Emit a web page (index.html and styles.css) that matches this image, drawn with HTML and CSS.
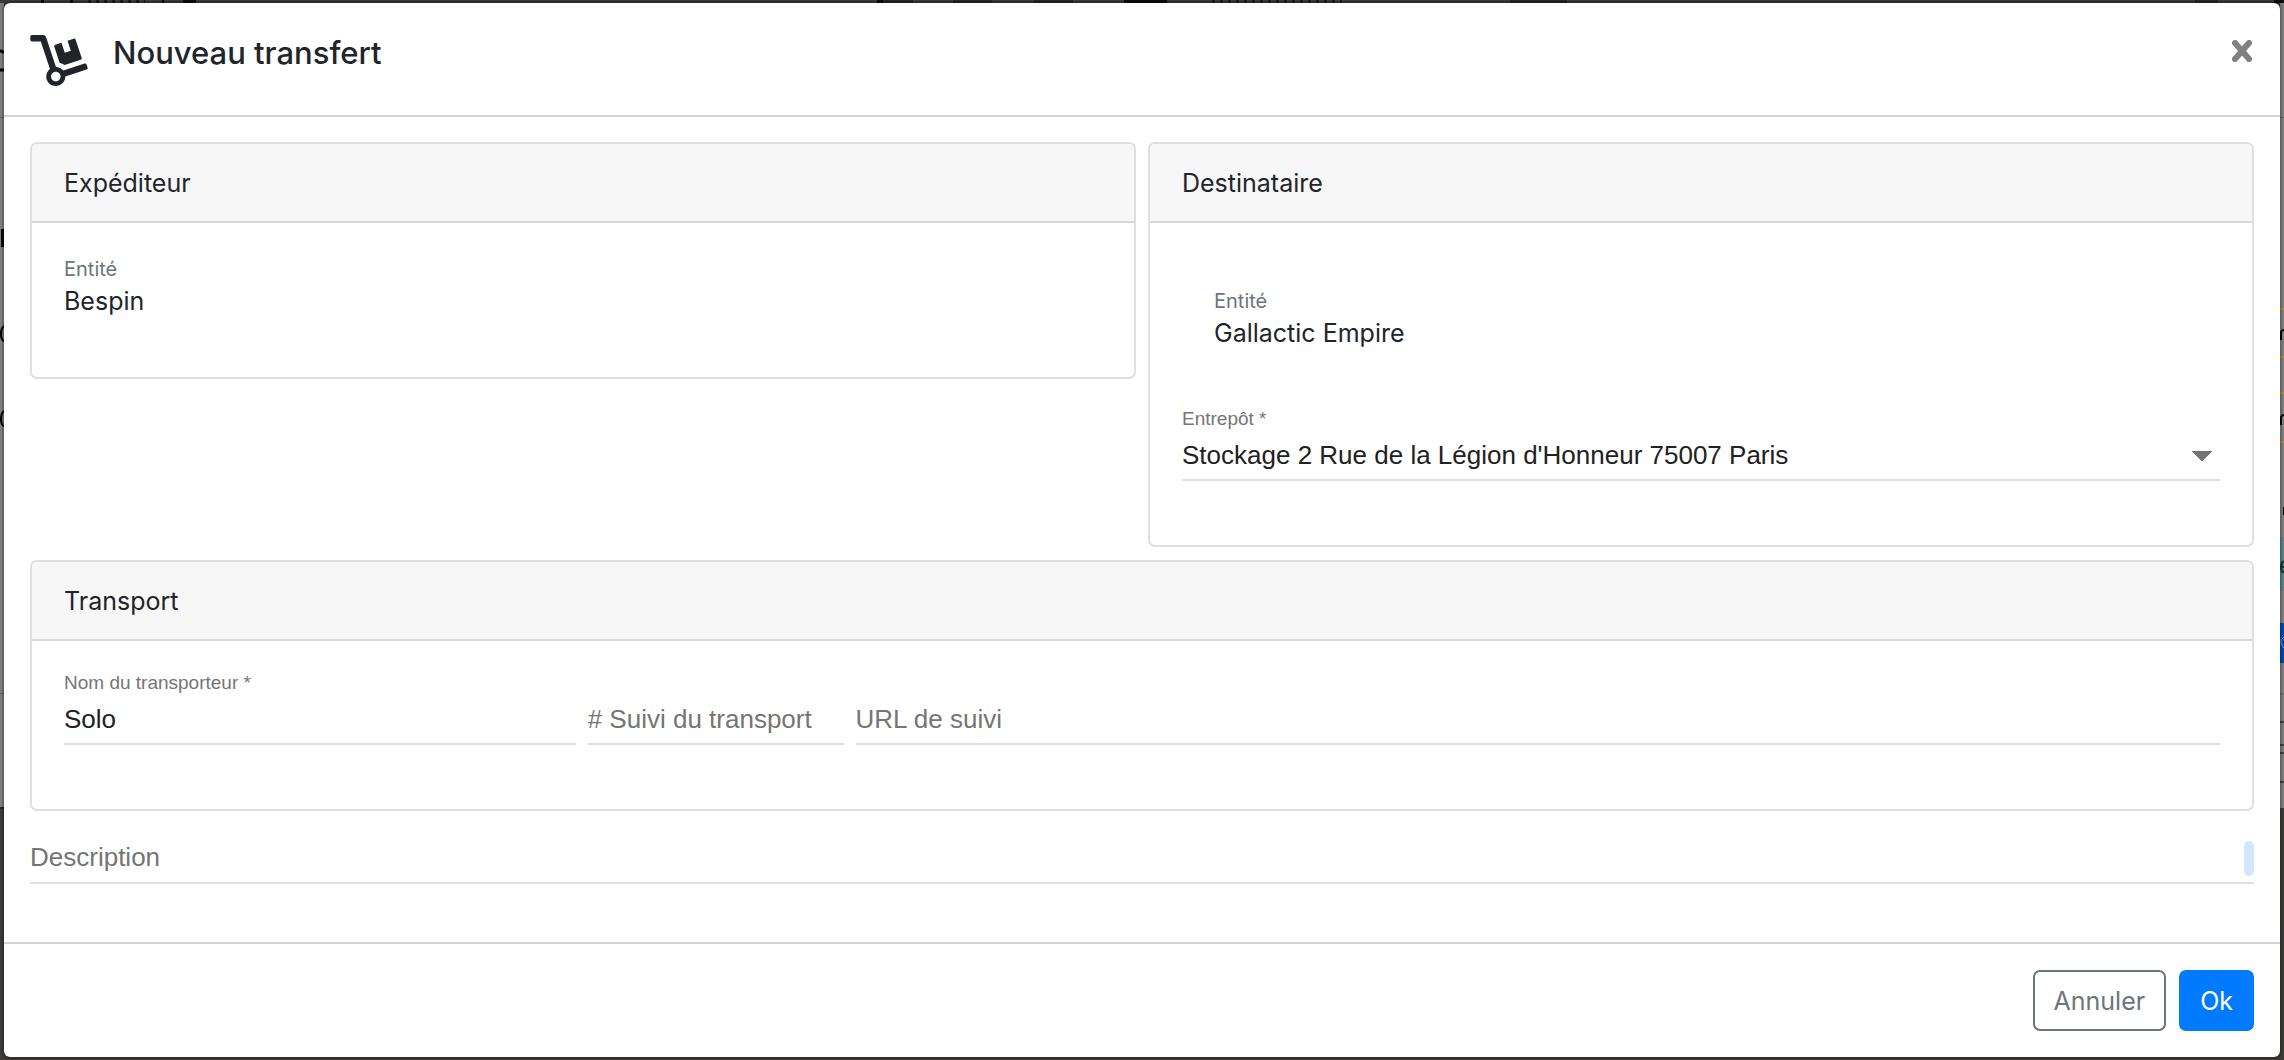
FILE: index.html
```
<!DOCTYPE html>
<html lang="fr">
<head>
<meta charset="utf-8">
<meta name="viewport" content="width=device-width, initial-scale=1">
<title>Nouveau transfert</title>
<link rel="stylesheet" href="styles.css">
</head>
<body>
<div class="backdrop" aria-hidden="true">
  <svg class="backdrop-edge backdrop-left" width="2284" height="3" viewBox="0 0 2284 3">
    <path d="M41 1.500h3M70 1.500h3M162 1.500h2M183 1.500h13M877 1.500h6M1124 1.500h43M2274 1.500h10" stroke="#0c0c0c" stroke-width="3"/>
    <path d="M883 1.500h30M953 1.500h39M1034 1.500h39M1510 1.500h57M2195 1.500h23" stroke="#262626" stroke-width="3"/>
    <path d="M88 1.500h57M1212 1.500h130" stroke="#1c1c1c" stroke-width="3" stroke-dasharray="3 5"/>
  </svg>
  <svg class="backdrop-edge backdrop-left" width="4" height="1060" viewBox="0 0 4 1060">
    <rect width="4" height="805" y="3" fill="#7d7d7b"/>
    <path d="M0 51q3 0 4 2M0 70h4" stroke="#000" stroke-width="3" fill="none"/>
    <path d="M0 117.500h4M0 693.500h4" stroke="#5c5c5c"/>
    <rect x="1" y="229" width="3" height="18" fill="#0a0a0a"/>
    <path d="M4 326Q1 328 1 334T4 341M4 411Q1 413 1 419T4 426" stroke="#000" stroke-width="2" fill="none"/>
    <rect y="807" width="4" height="2" fill="#222"/>
  </svg>
  <svg class="backdrop-edge backdrop-right" width="4" height="1060" viewBox="0 0 4 1060">
    <rect width="4" height="805" y="3" fill="#7d7d7d"/>
    <path d="M0 117.500h4M0 694h4" stroke="#5c5c5c"/>
    <path d="M0 309h4M0 357h4M0 393h4M0 442h4" stroke="#b58a14" stroke-width="2"/>
    <path d="M1 340v-8q1-2 3-2M1 425v-8q1-2 3-2" stroke="#000" stroke-width="2" fill="none"/>
    <rect x="3" y="507" width="1" height="8" fill="#000"/>
    <rect y="537" width="4" height="54" fill="#598085"/>
    <path d="M4 561Q1 563 1 567T4 573M1 567h3" stroke="#0c3338" stroke-width="2" fill="none"/>
    <rect y="623" width="4" height="40" fill="#0048a8"/>
    <path d="M4 637Q1 639 1 642T4 648" stroke="#8a9cba" stroke-width="1" fill="none"/>
    <path d="M0 722h4M0 745h4M0 753h4M0 782h4" stroke="#3c4044" stroke-width="2"/>
  </svg>
</div>
<form class="modal" role="dialog" aria-labelledby="modal-title">
  <header class="modal-header">
    <svg class="modal-icon" viewBox="0 0 576 512" aria-hidden="true"><path fill="currentColor" d="M294.200 277.700c18 5 34.700 13.400 49.500 24.700l161.500-53.800c8.400-2.800 12.900-11.900 10.100-20.200L454.900 47.200c-2.800-8.400-11.900-12.900-20.200-10.100l-61.100 20.400 33.100 99.400L346 177l-33.100-99.400-61.600 20.500c-8.400 2.800-12.900 11.900-10.100 20.200l53 159.400zm281 48.700L565 296c-2.800-8.400-11.900-12.900-20.200-10.100l-213.500 71.200c-17.200-22-43.600-36.400-73.500-37L158.400 21.900C154 8.800 141.800 0 128 0H16C7.200 0 0 7.200 0 16v32c0 8.800 7.200 16 16 16h88.900l92.200 276.700c-26.100 20.400-41.700 53.600-36 90.500 6.100 39.400 37.900 72.300 77.300 79.200 60.200 10.700 112.300-34.800 113.400-92.600l213.300-71.200c8.300-2.800 12.900-11.800 10.100-20.200zM256 464c-26.500 0-48-21.500-48-48s21.500-48 48-48 48 21.500 48 48-21.500 48-48 48z"/></svg>
    <h1 class="modal-title" id="modal-title">Nouveau transfert</h1>
    <button class="close" type="button" aria-label="Fermer"><svg width="20" height="22" viewBox="0 0 20 22" aria-hidden="true"><path d="M3 3l14 16M17 3L3 19" stroke="currentColor" stroke-width="6" stroke-linecap="round"/></svg></button>
  </header>
  <div class="modal-body">
    <div class="parties">
      <section class="card">
        <h2 class="card-header">Expéditeur</h2>
        <div class="card-body">
          <dl class="entity"><dt>Entité</dt><dd>Bespin</dd></dl>
        </div>
      </section>
      <section class="card">
        <h2 class="card-header">Destinataire</h2>
        <div class="card-body">
          <dl class="entity entity-nested"><dt>Entité</dt><dd>Gallactic Empire</dd></dl>
          <div class="field">
            <label class="field-label" for="warehouse">Entrepôt *</label>
            <select class="control select" id="warehouse" required>
              <option>Stockage 2 Rue de la Légion d'Honneur 75007 Paris</option>
            </select>
          </div>
        </div>
      </section>
    </div>
    <section class="card">
      <h2 class="card-header">Transport</h2>
      <div class="card-body transport">
        <div class="field">
          <label class="field-label" for="carrier">Nom du transporteur *</label>
          <input class="control" id="carrier" type="text" value="Solo" required>
        </div>
        <div class="field">
          <input class="control" type="text" aria-label="# Suivi du transport" placeholder="# Suivi du transport">
        </div>
        <div class="field">
          <input class="control" type="url" aria-label="URL de suivi" placeholder="URL de suivi">
        </div>
      </div>
    </section>
    <div class="description">
      <textarea class="control" rows="1" aria-label="Description" placeholder="Description"></textarea>
      <span class="grip"></span>
    </div>
  </div>
  <footer class="modal-footer">
    <button class="btn btn-outline" type="button">Annuler</button>
    <button class="btn btn-primary" type="submit">Ok</button>
  </footer>
</form>
</body>
</html>
```
FILE: styles.css
```
* { box-sizing: border-box; }

body {
  margin: 0;
  padding: 1px 2px;
  background: #3b3a39;
  color: #212529;
  font: 400 25px/38px Inter, sans-serif;
}

h1, h2, dl, dd { margin: 0; font-weight: 400; }

.backdrop {
  position: absolute;
  inset: 0;
  z-index: -1;
  overflow: hidden;
}

.backdrop-edge { position: absolute; top: 0; }
.backdrop-left { left: 0; }
.backdrop-right { right: 0; }

.modal {
  border: 2px solid rgba(0, 0, 0, .2);
  border-radius: 8px;
  background: #fff;
  background-clip: padding-box;
}

.modal-header {
  display: flex;
  align-items: flex-start;
  gap: 25px;
  padding: 26px;
  height: 114px;
  border-bottom: 2px solid #ced4da;
}

.modal-icon { width: 58px; height: 51px; margin-top: 6px; }

.modal-title { font-size: 31px; line-height: 48px; font-weight: 500; }

.close {
  display: flex;
  margin: 11px 2px 0 auto;
  padding: 0;
  border: 0;
  background: none;
  color: #808080;
}

.modal-body {
  display: flex;
  flex-direction: column;
  gap: 13px;
  padding: 25px 26px 58px;
}

.parties {
  display: grid;
  grid-template-columns: 1fr 1fr;
  align-items: start;
  gap: 12px;
}

.card { border: 2px solid #dfdfdf; border-radius: 7px; }

.card-header {
  padding: 20px 32px 19px;
  border-bottom: 2px solid #d8d8d8;
  border-radius: 5px 5px 0 0;
  background: #f7f7f7;
  font-size: 25px;
}

.card-body { padding: 32px; }

.entity { padding-bottom: 26px; }
.entity dt { color: #6c757d; font-size: 20px; line-height: 28px; }
.entity dd { line-height: 36px; }
.entity-nested { padding: 32px 32px 58px; }

.field {
  display: flex;
  flex-direction: column;
  justify-content: flex-end;
  padding-bottom: 32px;
  font-family: "Liberation Sans", Arial, sans-serif;
}

.field-label {
  margin-bottom: 4px;
  color: #757575;
  font-size: 19px;
  line-height: 20px;
}

.control {
  display: block;
  width: 100%;
  height: 48px;
  margin: 0;
  padding: 0 0 2px;
  border: 0;
  border-bottom: 2px solid #dfdfdf;
  border-radius: 0;
  outline: 0;
  background: none;
  color: #212121;
  font: 26px/42px "Liberation Sans", Arial, sans-serif;
  resize: none;
  overflow: hidden;
}

.control::placeholder { color: #757575; opacity: 1; }

.select {
  appearance: none;
  background: conic-gradient(from -45deg at 50% 100%, #757575 90deg, transparent 0) no-repeat right 8px top 18px / 20px 10px;
}

.transport {
  display: grid;
  grid-template-columns: 6fr 3fr 16fr;
  gap: 12px;
}

.description { position: relative; padding-top: 12px; }

.grip {
  position: absolute;
  top: 17px;
  right: 0;
  width: 10px;
  height: 35px;
  border-radius: 5px;
  background: #d2e6ff;
}

.modal-footer {
  display: flex;
  justify-content: flex-end;
  gap: 13px;
  padding: 26px;
  border-top: 2px solid #ced4da;
}

.btn {
  padding: 10px 19px 9px;
  border: 2px solid;
  border-radius: 7px;
  font: 25px/38px Inter, sans-serif;
}

.btn-outline { border-color: #6c757d; background: #fff; color: #6c757d; }
.btn-primary { border-color: #007bff; background: #007bff; color: #fff; }
```
